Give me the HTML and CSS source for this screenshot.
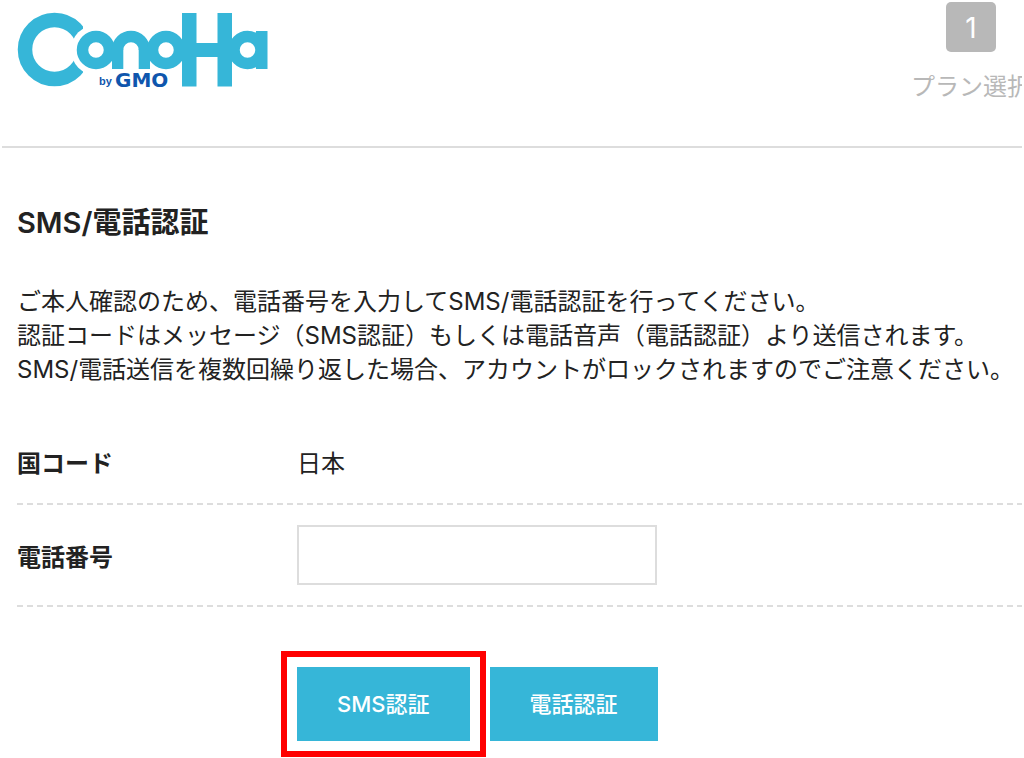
FILE: index.html
```html
<!DOCTYPE html>
<html lang="ja">
<head>
    <meta charset="UTF-8">
    <meta name="viewport" content="width=device-width, initial-scale=1.0">
    <title>SMS/電話認証</title>
    <link rel="stylesheet" href="styles.css">
</head>
<body>
    <header class="header">
        <a href="#" class="logo">
            <svg width="252" height="80" viewBox="17 11 252 80" role="img" aria-label="ConoHa byGMO">
                <defs>
                    <mask id="cut" maskUnits="userSpaceOnUse" x="0" y="0" width="280" height="100">
                        <rect x="0" y="0" width="280" height="100" fill="#fff"/>
                        <circle cx="96" cy="50" r="25" fill="#000"/>
                        <rect x="83" y="0" width="40" height="100" fill="#000"/>
                    </mask>
                </defs>
                <circle cx="54.500" cy="49.500" r="29.500" fill="none" stroke="#36b6d8" stroke-width="14.500" mask="url(#cut)"/>
                <g fill="none" stroke="#36b6d8" stroke-width="11.500">
                    <circle cx="96" cy="50" r="13.500"/>
                    <circle cx="131" cy="50" r="13.500" stroke-dasharray="0 42.400 42.400 0"/>
                    <circle cx="166" cy="50" r="13.500"/>
                    <circle cx="247.500" cy="50" r="13.500"/>
                </g>
                <g fill="#36b6d8">
                    <rect x="112" y="49" width="11.300" height="20"/>
                    <rect x="138.700" y="49" width="11.300" height="20"/>
                    <rect x="182" y="13" width="14.500" height="73.500"/>
                    <rect x="217.500" y="13" width="14.500" height="73.500"/>
                    <rect x="194" y="43" width="26" height="14"/>
                    <rect x="256" y="31" width="11.500" height="38"/>
                </g>
                <text x="99" y="85" class="logo-by">by</text>
                <text x="115" y="87" class="logo-gmo">GMO</text>
            </svg>
        </a>
        <ol class="steps">
            <li class="step">
                <span class="step-number">1</span>
                <span class="step-name">プラン選択</span>
            </li>
        </ol>
    </header>

    <main class="container">
        <h1>SMS/電話認証</h1>
        <p class="lead">
            ご本人確認のため、電話番号を入力してSMS/電話認証を行ってください。<br>
            認証コードはメッセージ（SMS認証）もしくは電話音声（電話認証）より送信されます。<br>
            SMS/電話送信を複数回繰り返した場合、アカウントがロックされますのでご注意ください。
        </p>

        <form>
            <div class="row">
                <span class="row-label">国コード</span>
                <span>日本</span>
            </div>
            <div class="row">
                <label class="row-label" for="phone">電話番号</label>
                <input type="tel" id="phone" name="phone">
            </div>
            <div class="buttons">
                <button type="button" class="btn btn-sms">SMS認証</button>
                <button type="button" class="btn btn-tel">電話認証</button>
            </div>
        </form>
    </main>
</body>
</html>
```

FILE: styles.css
```css
* {
    box-sizing: border-box;
}
body {
    margin: 0;
    background: #fff;
    color: #222;
    font-family: Inter, "Noto Sans CJK JP", sans-serif;
    font-size: 24px;
    line-height: 34px;
    overflow-x: hidden;
}
.header {
    display: flex;
    justify-content: space-between;
    align-items: flex-start;
    height: 148px;
    margin: 0 2px;
    border-bottom: 2px solid #ddd;
}
.logo {
    padding: 11px 0 0 15px;
}
.logo svg {
    display: block;
}
.logo-by {
    fill: #0f56ad;
    font: bold 11px "Liberation Sans", sans-serif;
}
.logo-gmo {
    fill: #0f56ad;
    font: bold 20px "DejaVu Sans", sans-serif;
}
/* the step list runs past the right edge */
.steps {
    width: 111px;
    margin: 0;
    padding: 2px 0 0;
    list-style: none;
    overflow: hidden;
}
.step {
    display: flex;
    flex-direction: column;
    align-items: center;
    gap: 18px;
    width: 120px;
    color: #b8b8b8;
    white-space: nowrap;
}
.step-number {
    width: 50px;
    height: 50px;
    border-radius: 5px;
    background: #b8b8b8;
    color: #fff;
    font-size: 28px;
    line-height: 52px;
    text-align: center;
}
.container {
    padding: 58px 2px 0 17px;
}
h1 {
    margin: 0;
    font-size: 29px;
    font-weight: 600;
    line-height: 34px;
}
.lead {
    margin: 45px 0 51px;
    white-space: nowrap;
}
.row {
    display: grid;
    grid-template-columns: 280px 1fr;
    align-items: center;
    padding: 20px 0 22px;
    background: repeating-linear-gradient(to right, #ddd 0 6px, transparent 6px 10px) left bottom / 100% 2px no-repeat;
}
.row:first-child {
    padding: 9px 0 24px;
}
.row-label {
    font-weight: bold;
}
label.row-label {
    padding-top: 6px;
}
input {
    width: 100%;
    max-width: 360px;
    height: 60px;
    padding: 0 12px;
    border: 2px solid #ddd;
    border-radius: 0;
    background: #fff;
    font: inherit;
}
.buttons {
    display: flex;
    gap: 20px;
    padding: 60px 0 17px 280px;
}
.btn {
    padding: 20px 40px;
    border: none;
    background: #36b6d8;
    color: #fff;
    font: inherit;
    font-size: 22px;
    font-weight: 500;
    cursor: pointer;
}
.btn-sms {
    outline: 6px solid #f00;
    outline-offset: 10px;
}
```
